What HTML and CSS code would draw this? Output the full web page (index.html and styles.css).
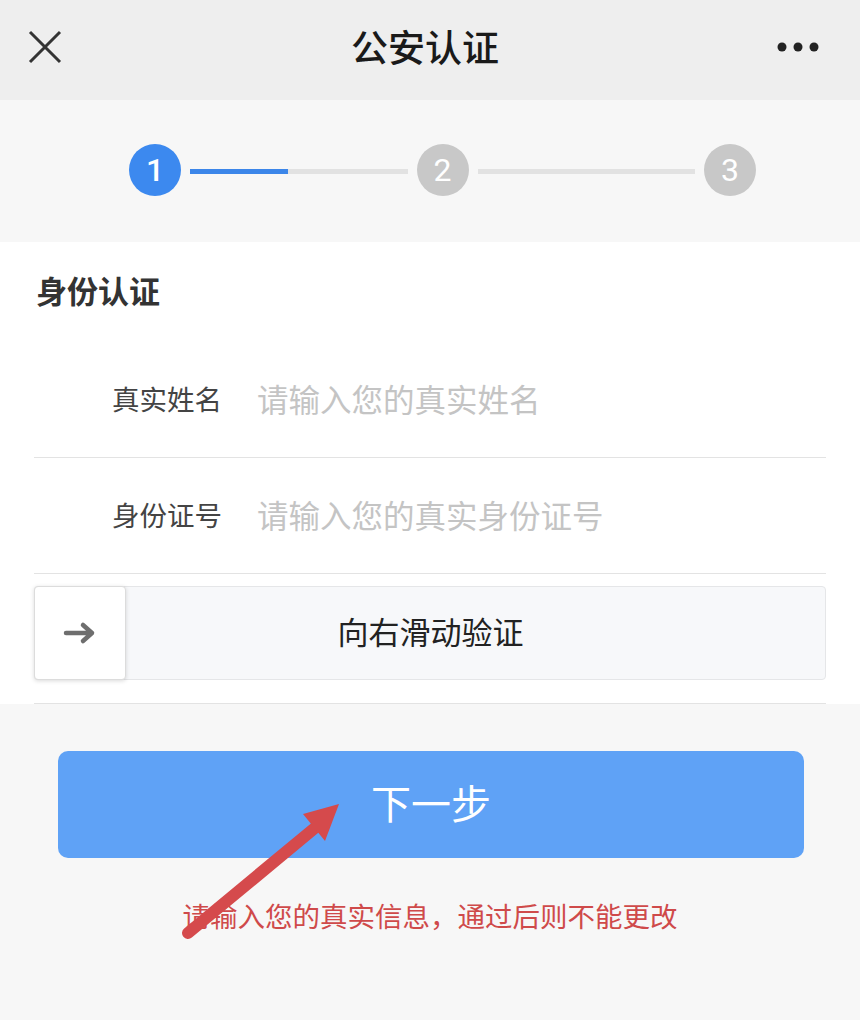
FILE: index.html
```html
<!DOCTYPE html>
<html>
<head>
    <meta charset="utf-8">
    <title>公安认证</title>
    <link rel="stylesheet" href="styles.css">
</head>
<body>
    <div class="header">
        <svg class="close-icon" width="34" height="34" viewBox="0 0 34 34">
            <path d="M2 2 L32 32 M32 2 L2 32" stroke="#333" stroke-width="3" fill="none"/>
        </svg>
        <div class="title">公安认证</div>
        <svg class="more-icon" width="44" height="12" viewBox="0 0 44 12">
            <circle cx="6" cy="6" r="4.5" fill="#222"/>
            <circle cx="22" cy="6" r="4.5" fill="#222"/>
            <circle cx="38" cy="6" r="4.5" fill="#222"/>
        </svg>
    </div>

    <div class="steps">
        <div class="step active">1</div>
        <div class="step-line"><div class="step-line-fill"></div></div>
        <div class="step">2</div>
        <div class="step-line"></div>
        <div class="step">3</div>
    </div>

    <div class="form-card">
        <div class="card-title">身份认证</div>
        <div class="form-row">
            <span class="row-label">真实姓名</span>
            <input class="row-input" type="text" placeholder="请输入您的真实姓名">
        </div>
        <div class="form-row">
            <span class="row-label">身份证号</span>
            <input class="row-input" type="text" placeholder="请输入您的真实身份证号">
        </div>
        <div class="slider-wrap">
            <div class="slider">
                <div class="slider-handle">
                    <svg width="34" height="26" viewBox="0 0 34 26">
                        <path d="M3 13 L29 13 M20 5 L29 13 L20 21" stroke="#6e6e6e" stroke-width="4.5" fill="none" stroke-linecap="round" stroke-linejoin="round"/>
                    </svg>
                </div>
                <div class="slider-text">向右滑动验证</div>
            </div>
        </div>
    </div>

    <button class="next-btn">下一步</button>
    <div class="hint">请输入您的真实信息，通过后则不能更改</div>

    <svg class="pointer-arrow" width="860" height="1020" viewBox="0 0 860 1020">
        <line x1="188" y1="933" x2="316" y2="827" stroke="#d54a4c" stroke-width="12" stroke-linecap="round"/>
        <polygon points="339,804 303,814 325,841" fill="#d54a4c"/>
    </svg>
</body>
</html>
```

FILE: styles.css
```css
body {
    margin: 0;
    width: 860px;
    height: 1020px;
    background-color: #f7f7f7;
    font-family: "Noto Sans CJK SC", "Noto Sans", sans-serif;
    position: relative;
    overflow: hidden;
}
.header {
    height: 100px;
    background-color: #eeeeee;
    display: flex;
    align-items: center;
    justify-content: space-between;
    padding: 0 40px 0 28px;
}
.close-icon {
    margin-top: -6px;
}
.title {
    font-size: 37px;
    font-weight: 500;
    color: #1a1a1a;
    margin-left: 12px;
    margin-top: -8px;
}
.more-icon {
    margin-top: -6px;
}
.steps {
    height: 142px;
    display: flex;
    align-items: center;
    padding: 0 104px 0 129px;
}
.step {
    width: 52px;
    height: 52px;
    border-radius: 50%;
    background-color: #c8c8c8;
    color: #fff;
    font-family: Roboto, "Liberation Sans", sans-serif;
    font-size: 32px;
    font-weight: 400;
    display: flex;
    align-items: center;
    justify-content: center;
    flex-shrink: 0;
    margin-top: -2px;
}
.step.active {
    background-color: #3c89ef;
    font-weight: 500;
}
.step-line {
    flex: 1;
    height: 5px;
    margin: 0 9px;
    background-color: #e2e2e2;
}
.step-line-fill {
    width: 45%;
    height: 100%;
    background-color: #3c86e9;
}
.form-card {
    background-color: #fff;
    padding: 0 34px;
}
.card-title {
    height: 100px;
    line-height: 96px;
    font-size: 31px;
    font-weight: bold;
    color: #333;
    padding-left: 2px;
}
.form-row {
    height: 111px;
    display: flex;
    align-items: center;
    border-bottom: 1px solid #e3e3e3;
    padding-left: 78px;
    padding-bottom: 4px;
}
.row-label {
    font-size: 27.5px;
    color: #444;
    width: 145px;
    flex-shrink: 0;
}
.row-input {
    border: none;
    outline: none;
    background: transparent;
    font-family: "Noto Sans CJK SC", "Noto Sans", sans-serif;
    font-size: 31.5px;
    color: #333;
    padding: 0;
    flex: 1;
}
.row-input::placeholder {
    color: #c4c4c4;
}
.slider-wrap {
    padding: 12px 0 23px;
    border-bottom: 1px solid #e3e3e3;
}
.slider {
    height: 92px;
    border: 1px solid #e5e6e8;
    border-radius: 4px;
    background-color: #f7f8fa;
    display: flex;
    align-items: center;
    position: relative;
}
.slider-handle {
    width: 90px;
    height: 92px;
    margin: -1px 0 0 -1px;
    background-color: #fff;
    border: 1px solid #dcdcdc;
    border-radius: 4px;
    box-shadow: 0 1px 4px rgba(0, 0, 0, 0.15);
    display: flex;
    align-items: center;
    justify-content: center;
}
.slider-text {
    flex: 1;
    text-align: center;
    font-size: 31px;
    color: #222;
    margin-right: 90px;
    margin-top: -6px;
}
.next-btn {
    display: block;
    width: 746px;
    height: 107px;
    margin: 47px 0 0 58px;
    border: none;
    border-radius: 10px;
    background-color: #5fa2f6;
    color: #fff;
    font-family: "Noto Sans CJK SC", "Noto Sans", sans-serif;
    font-size: 40px;
    padding-bottom: 6px;
}
.hint {
    margin-top: 37px;
    text-align: center;
    font-size: 27.5px;
    line-height: 40px;
    color: #cf4a4a;
}
.pointer-arrow {
    position: absolute;
    top: 0;
    left: 0;
    pointer-events: none;
}
```
